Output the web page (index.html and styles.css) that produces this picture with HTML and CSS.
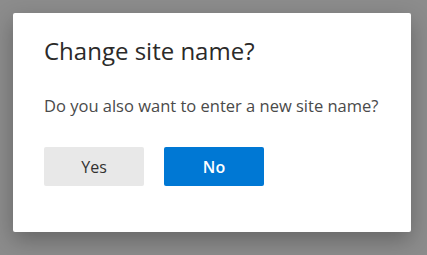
FILE: index.html
```html
<!DOCTYPE html>
<html>
<head>
<meta charset="utf-8">
<link rel="stylesheet" href="styles.css">
</head>
<body>
<div class="dialog">
  <h1 class="title">Change site name?</h1>
  <p class="message">Do you also want to enter a new site name?</p>
  <div class="actions">
    <button class="btn btn-secondary">Yes</button>
    <button class="btn btn-primary">No</button>
  </div>
</div>
</body>
</html>
```
FILE: styles.css
```css
html, body {
  margin: 0;
  height: 100%;
}
body {
  background: #8c8c8c;
  padding: 13px 0 0 13px;
  box-sizing: border-box;
  font-family: "Open Sans", "Noto Sans", sans-serif;
}
.dialog {
  width: 398px;
  height: 219px;
  box-sizing: border-box;
  background: #fff;
  border-radius: 2px;
  box-shadow: 0 8px 22px rgba(0,0,0,0.28);
  padding: 22px 31px 0 31px;
}
.title {
  margin: 0;
  font-size: 24px;
  font-weight: 500;
  color: #2b2a29;
  line-height: 32px;
}
.message {
  margin: 28px 0 0 0;
  font-size: 16.5px;
  font-weight: 400;
  color: #4a4a4a;
  line-height: 22px;
}
.actions {
  display: flex;
  gap: 20px;
  margin-top: 30px;
}
.btn {
  width: 100px;
  height: 39px;
  border: none;
  border-radius: 2px;
  font-family: inherit;
  font-size: 16px;
  font-weight: 600;
  padding: 0;
}
.btn-secondary {
  background: #e8e8e8;
  color: #323130;
  font-weight: 500;
}
.btn-primary {
  background: #0078d4;
  color: #fff;
}
```
